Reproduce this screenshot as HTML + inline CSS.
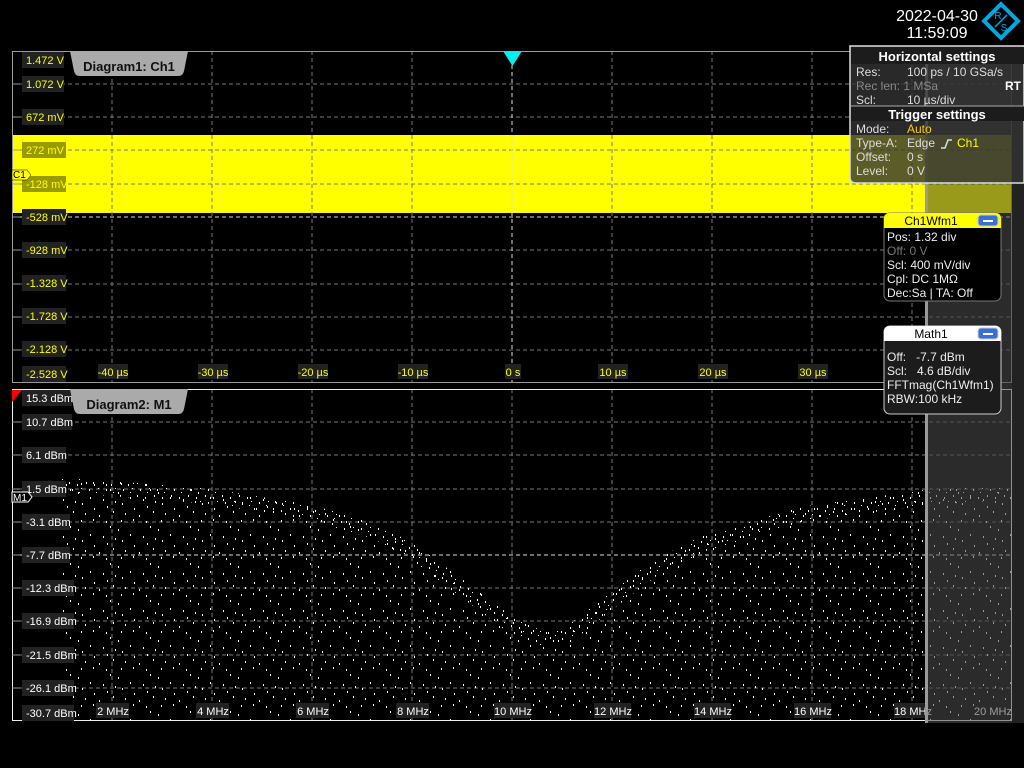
<!DOCTYPE html>
<html><head><meta charset="utf-8"><style>
html,body{margin:0;padding:0;background:#000;width:1024px;height:768px;overflow:hidden}
svg{display:block}
text{font-family:"Liberation Sans",sans-serif}
</style></head><body>
<svg width="1024" height="768" viewBox="0 0 1024 768" xmlns="http://www.w3.org/2000/svg">
<defs>
<pattern id="sp" width="40" height="37" patternUnits="userSpaceOnUse">
<g fill="#fff">
<rect x="1" y="2" width="1" height="2"/><rect x="13" y="1" width="1" height="2"/><rect x="26" y="3" width="1" height="2"/><rect x="38" y="11" width="1" height="2"/>
<rect x="10" y="16" width="1" height="2"/><rect x="23" y="18" width="1" height="2"/><rect x="35" y="20" width="1" height="2"/>
<rect x="2" y="22" width="1" height="2"/><rect x="14" y="27" width="1" height="2"/><rect x="27" y="25" width="1" height="2"/><rect x="33" y="30" width="1" height="2"/>
<rect x="5" y="32" width="1" height="2"/><rect x="19" y="34" width="1" height="2"/><rect x="30" y="8" width="1" height="2"/>
</g></pattern>
<pattern id="dp" width="17" height="13" patternUnits="userSpaceOnUse">
<g fill="#fff">
<rect x="1" y="1" width="1" height="2"/><rect x="9" y="3" width="1" height="2"/><rect x="13" y="7" width="1" height="1"/><rect x="4" y="8" width="1" height="2"/><rect x="11" y="11" width="1" height="1"/>
</g></pattern>
<clipPath id="cl"><path d="M62,478 L112,481 L212,489 L312,505 L380,525 L420,548 L470,585 L510,615 L540,630 L565,628 L600,600 L650,562 L700,537 L800,507 L925,490 L1012,485 L1012,720 L62,720 Z"/></clipPath>
</defs>

<!-- date / logo -->
<text x="937" y="21" fill="#fff" font-size="16" text-anchor="middle">2022-04-30</text>
<text x="937" y="38" fill="#fff" font-size="16" text-anchor="middle">11:59:09</text>
<g transform="translate(1001,21)">
<rect x="-12" y="-12" width="24" height="24" transform="rotate(45)" fill="none" stroke="#00a8e0" stroke-width="4"/>
<text x="-3" y="-2" fill="#00a8e0" font-size="10" text-anchor="middle">R</text>
<text x="3" y="10" fill="#00a8e0" font-size="10" text-anchor="middle">S</text>
<line x1="-6" y1="6" x2="6" y2="-6" stroke="#00a8e0" stroke-width="1.5"/>
</g>

<!-- Diagram 1 -->
<rect x="926" y="48" width="98" height="675" fill="#222"/>
<rect x="12" y="135" width="1000" height="78" fill="#ff0"/>
<g stroke="#777" stroke-dasharray="4,3" stroke-width="1">
<path d="M112,51V383M212,51V383M312,51V383M412,51V383M612,51V383M712,51V383M812,51V383M912,51V383"/>
<path d="M12,84H1012M12,117H1012M12,150H1012M12,184H1012M12,250H1012M12,284H1012M12,317H1012M12,350H1012"/>
</g>
<path d="M512,51V383M12,217H1012" stroke="#ddd" stroke-dasharray="4,3"/>
<rect x="12.5" y="51.5" width="999" height="331" fill="none" stroke="#999"/>
<path d="M12,84h8M12,117h8M12,150h8M12,184h8M12,217h8M12,250h8M12,284h8M12,317h8M12,350h8" stroke="#999"/>
<g font-size="11" text-anchor="start">
<rect x="22" y="52" width="42" height="16" fill="#222"/><text x="26" y="64" fill="#ff0">1.472 V</text>
<rect x="22" y="76" width="42" height="16" fill="#222"/><text x="26" y="88" fill="#ff0">1.072 V</text>
<rect x="22" y="109" width="42" height="16" fill="#222"/><text x="26" y="121" fill="#ff0">672 mV</text>
<rect x="22" y="142" width="44" height="16" fill="#999900"/><text x="26" y="154" fill="#ff0">272 mV</text>
<rect x="22" y="176" width="44" height="16" fill="#999900"/><text x="26" y="188" fill="#ff0">-128 mV</text>
<rect x="22" y="209" width="44" height="16" fill="#222"/><text x="26" y="221" fill="#ff0">-528 mV</text>
<rect x="22" y="242" width="44" height="16" fill="#222"/><text x="26" y="254" fill="#ff0">-928 mV</text>
<rect x="22" y="275" width="44" height="16" fill="#222"/><text x="26" y="287" fill="#ff0">-1.328 V</text>
<rect x="22" y="308" width="44" height="16" fill="#222"/><text x="26" y="320" fill="#ff0">-1.728 V</text>
<rect x="22" y="341" width="44" height="16" fill="#222"/><text x="26" y="353" fill="#ff0">-2.128 V</text>
<rect x="22" y="366" width="44" height="16" fill="#222"/><text x="26" y="378" fill="#ff0">-2.528 V</text>
</g>
<path d="M12,170h15l4,5l-4,5h-15z" fill="#ff0" stroke="#000" stroke-width="0.5"/><text x="13" y="178" font-size="10" fill="#000">C1</text>
<g font-size="11" fill="#ff0" text-anchor="middle">
<rect x="98" y="364" width="30" height="15" fill="#222"/><text x="113" y="376">-40 µs</text>
<rect x="198" y="364" width="30" height="15" fill="#222"/><text x="213" y="376">-30 µs</text>
<rect x="298" y="364" width="30" height="15" fill="#222"/><text x="313" y="376">-20 µs</text>
<rect x="398" y="364" width="30" height="15" fill="#222"/><text x="413" y="376">-10 µs</text>
<rect x="505" y="364" width="16" height="15" fill="#222"/><text x="513" y="376">0 s</text>
<rect x="598" y="364" width="30" height="15" fill="#222"/><text x="613" y="376">10 µs</text>
<rect x="698" y="364" width="30" height="15" fill="#222"/><text x="713" y="376">20 µs</text>
<rect x="798" y="364" width="30" height="15" fill="#222"/><text x="813" y="376">30 µs</text>
</g>
<path d="M70,51h118l-4,20q-1,5-6,5h-98q-5,0-6-5z" fill="#aaa"/>
<text x="129" y="71" font-size="13" font-weight="bold" fill="#111" text-anchor="middle">Diagram1: Ch1</text>
<path d="M503,51h19l-9.5,15z" fill="#0ee"/>

<!-- Diagram 2 -->
<g stroke="#777" stroke-dasharray="4,3" stroke-width="1">
<path d="M112,389V721M212,389V721M312,389V721M412,389V721M512,389V721M612,389V721M712,389V721M812,389V721M912,389V721"/>
<path d="M12,422H1012M12,455H1012M12,489H1012M12,522H1012M12,588H1012M12,621H1012M12,655H1012M12,688H1012"/>
</g>
<path d="M12,555H1012" stroke="#ddd" stroke-dasharray="4,3"/>
<g clip-path="url(#cl)">
<rect x="60" y="470" width="960" height="260" fill="url(#sp)"/>
<path d="M62,478 L112,481 L212,489 L312,505 L380,525 L420,548 L470,585 L510,615 L540,630 L565,628 L600,600 L650,562 L700,537 L800,507 L925,490 L1012,485" fill="none" stroke="url(#dp)" stroke-width="30"/>
</g>
<rect x="12.5" y="389.5" width="999" height="331" fill="none" stroke="#eee"/>
<path d="M12,422h8M12,455h8M12,489h8M12,522h8M12,555h8M12,588h8M12,621h8M12,655h8M12,688h8" stroke="#999"/>
<g font-size="11" fill="#fff">
<rect x="22" y="390" width="50" height="16" fill="#222"/><text x="26" y="402">15.3 dBm</text>
<rect x="22" y="414" width="50" height="16" fill="#222"/><text x="26" y="426">10.7 dBm</text>
<rect x="22" y="447" width="44" height="16" fill="#222"/><text x="26" y="459">6.1 dBm</text>
<rect x="22" y="481" width="44" height="16" fill="#222"/><text x="26" y="493">1.5 dBm</text>
<rect x="22" y="514" width="48" height="16" fill="#222"/><text x="26" y="526">-3.1 dBm</text>
<rect x="22" y="547" width="48" height="16" fill="#222"/><text x="26" y="559">-7.7 dBm</text>
<rect x="22" y="580" width="52" height="16" fill="#222"/><text x="26" y="592">-12.3 dBm</text>
<rect x="22" y="613" width="52" height="16" fill="#222"/><text x="26" y="625">-16.9 dBm</text>
<rect x="22" y="647" width="52" height="16" fill="#222"/><text x="26" y="659">-21.5 dBm</text>
<rect x="22" y="680" width="52" height="16" fill="#222"/><text x="26" y="692">-26.1 dBm</text>
<rect x="22" y="705" width="52" height="16" fill="#222"/><text x="26" y="717">-30.7 dBm</text>
</g>
<path d="M12,390h10l-10,12z" fill="#f00"/>
<path d="M12,492h16l4,5l-4,5h-16z" fill="#000" stroke="#fff"/><text x="13" y="501" font-size="10" fill="#fff">M1</text>
<g font-size="11" fill="#fff" text-anchor="middle">
<rect x="96" y="703" width="33" height="15" fill="#222"/><text x="113" y="715">2 MHz</text>
<rect x="196" y="703" width="33" height="15" fill="#222"/><text x="213" y="715">4 MHz</text>
<rect x="296" y="703" width="33" height="15" fill="#222"/><text x="313" y="715">6 MHz</text>
<rect x="396" y="703" width="33" height="15" fill="#222"/><text x="413" y="715">8 MHz</text>
<rect x="494" y="703" width="37" height="15" fill="#222"/><text x="513" y="715">10 MHz</text>
<rect x="594" y="703" width="37" height="15" fill="#222"/><text x="613" y="715">12 MHz</text>
<rect x="694" y="703" width="37" height="15" fill="#222"/><text x="713" y="715">14 MHz</text>
<rect x="794" y="703" width="37" height="15" fill="#222"/><text x="813" y="715">16 MHz</text>
<rect x="894" y="703" width="37" height="15" fill="#222"/><text x="913" y="715">18 MHz</text>
<rect x="974" y="703" width="37" height="15" fill="#222"/><text x="993" y="715">20 MHz</text>
</g>
<path d="M70,389h118l-4,20q-1,5-6,5h-98q-5,0-6-5z" fill="#aaa"/>
<text x="129" y="409" font-size="13" font-weight="bold" fill="#111" text-anchor="middle">Diagram2: M1</text>

<!-- gray overlay on right -->
<rect x="926" y="48" width="86" height="675" fill="#333" fill-opacity="0.5"/>
<rect x="925" y="48" width="3" height="675" fill="#999"/>
<rect x="1012" y="48" width="12" height="675" fill="#222"/>

<!-- settings panel -->
<path d="M850,46h174v137h-168q-6,0-6-6z" fill="#333" fill-opacity="0.8" stroke="#ddd" stroke-width="1.5"/>
<rect x="851" y="47" width="173" height="17" fill="#1c1c1c"/>
<text x="937" y="61" font-size="13" font-weight="bold" fill="#fff" text-anchor="middle">Horizontal settings</text>
<g font-size="12">
<text x="856" y="76" fill="#ddd">Res:</text><text x="907" y="76" fill="#ddd">100 ps / 10 GSa/s</text>
<text x="856" y="90" fill="#888">Rec len: 1 MSa</text><text x="1005" y="90" fill="#fff" font-weight="bold">RT</text>
<text x="856" y="104" fill="#ddd">Scl:</text><text x="907" y="104" fill="#ddd">10 µs/div</text>
</g>
<rect x="851" y="106" width="173" height="15" fill="#1c1c1c"/>
<line x1="851" y1="106" x2="1024" y2="106" stroke="#aaa"/>
<text x="937" y="119" font-size="13" font-weight="bold" fill="#fff" text-anchor="middle">Trigger settings</text>
<g font-size="12">
<text x="856" y="133" fill="#ddd">Mode:</text><text x="907" y="133" fill="#fc0">Auto</text>
<text x="856" y="147" fill="#ddd">Type-A:</text><text x="907" y="147" fill="#ddd">Edge</text>
<path d="M941,148h4l3,-8h4" fill="none" stroke="#ddd" stroke-width="1.5"/>
<text x="957" y="147" fill="#ff0">Ch1</text>
<text x="856" y="161" fill="#ddd">Offset:</text><text x="907" y="161" fill="#ddd">0 s</text>
<text x="856" y="175" fill="#ddd">Level:</text><text x="907" y="175" fill="#ddd">0 V</text>
</g>

<!-- Ch1Wfm1 box -->
<rect x="884" y="213" width="117" height="88" rx="6" fill="#000" stroke="#777"/>
<path d="M884,228v-9q0-6,6-6h105q6,0,6,6v9z" fill="#ff0"/>
<text x="931" y="225" font-size="12" fill="#000" text-anchor="middle">Ch1Wfm1</text>
<rect x="978" y="215" width="20" height="11" rx="3" fill="#3a6fd8" stroke="#ccc"/><rect x="983" y="220" width="10" height="2" fill="#fff"/>
<g font-size="12">
<text x="887" y="241" fill="#eee">Pos: 1.32 div</text>
<text x="887" y="255" fill="#777">Off: 0 V</text>
<text x="887" y="269" fill="#eee">Scl: 400 mV/div</text>
<text x="887" y="283" fill="#eee">Cpl: DC 1MΩ</text>
<text x="887" y="297" fill="#eee">Dec:Sa | TA: Off</text>
</g>

<!-- Math1 box -->
<rect x="884" y="326" width="117" height="88" rx="6" fill="#1c1c1c" stroke="#ccc"/>
<path d="M884,341v-9q0-6,6-6h105q6,0,6,6v9z" fill="#fff"/>
<text x="931" y="338" font-size="12" fill="#000" text-anchor="middle">Math1</text>
<rect x="978" y="328" width="20" height="11" rx="3" fill="#3a6fd8" stroke="#ccc"/><rect x="983" y="333" width="10" height="2" fill="#fff"/>
<g font-size="12" fill="#eee">
<text x="887" y="361" xml:space="preserve">Off:   -7.7 dBm</text>
<text x="887" y="375" xml:space="preserve">Scl:   4.6 dB/div</text>
<text x="887" y="389">FFTmag(Ch1Wfm1)</text>
<text x="887" y="403">RBW:100 kHz</text>
</g>
</svg>
</body></html>
